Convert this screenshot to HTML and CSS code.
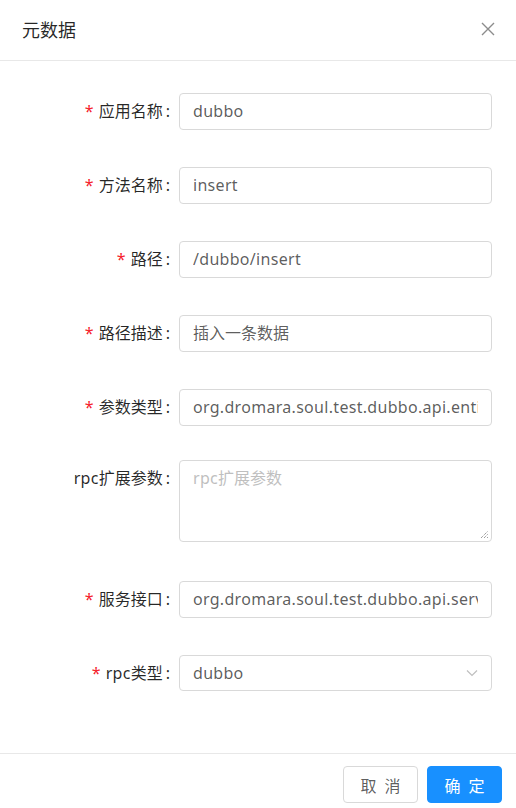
FILE: index.html
```html
<!DOCTYPE html>
<html lang="zh">
<head>
<meta charset="utf-8">
<title>元数据</title>
<link rel="stylesheet" href="styles.css">
</head>
<body>
<div class="modal">
  <div class="modal-header">
    <div class="modal-title">元数据</div>
    <svg class="close" width="14" height="14" viewBox="0 0 14 14"><path d="M1 1L13 13M13 1L1 13" stroke="#8c8c8c" stroke-width="1.4" fill="none"/></svg>
  </div>
  <div class="modal-body">
    <div class="form-item">
      <div class="label"><span class="req">*</span>应用名称<span class="colon">:</span></div>
      <div class="control input"><div class="value"><span class="en">dubbo</span></div></div>
    </div>
    <div class="form-item">
      <div class="label"><span class="req">*</span>方法名称<span class="colon">:</span></div>
      <div class="control input"><div class="value"><span class="en">insert</span></div></div>
    </div>
    <div class="form-item">
      <div class="label"><span class="req">*</span>路径<span class="colon">:</span></div>
      <div class="control input"><div class="value"><span class="en">/dubbo/insert</span></div></div>
    </div>
    <div class="form-item">
      <div class="label"><span class="req">*</span>路径描述<span class="colon">:</span></div>
      <div class="control input"><div class="value">插入一条数据</div></div>
    </div>
    <div class="form-item before-area">
      <div class="label"><span class="req">*</span>参数类型<span class="colon">:</span></div>
      <div class="control input"><div class="value"><span class="en">org.dromara.soul.test.dubbo.api.entity</span></div></div>
    </div>
    <div class="form-item area-item">
      <div class="label"><span class="en">rpc</span>扩展参数<span class="colon">:</span></div>
      <div class="control textarea">
        <span class="placeholder"><span class="en">rpc</span>扩展参数</span>
        <svg class="grip" width="9" height="9" viewBox="0 0 9 9"><path d="M1 8L8 1M4 8L8 4M7 8L8 7" stroke="#666" stroke-width="0.9" stroke-dasharray="1 1" fill="none"/></svg>
      </div>
    </div>
    <div class="form-item">
      <div class="label"><span class="req">*</span>服务接口<span class="colon">:</span></div>
      <div class="control input"><div class="value"><span class="en">org.dromara.soul.test.dubbo.api.service</span></div></div>
    </div>
    <div class="form-item">
      <div class="label"><span class="req">*</span><span class="en">rpc</span>类型<span class="colon">:</span></div>
      <div class="control input select">
        <span class="en">dubbo</span>
        <svg class="arrow" width="12" height="8" viewBox="0 0 12 8"><path d="M1 1.5L6 6.5L11 1.5" stroke="#bfbfbf" stroke-width="1.2" fill="none"/></svg>
      </div>
    </div>
  </div>
  <div class="modal-footer">
    <div class="btn">取 消</div>
    <div class="btn primary">确 定</div>
  </div>
</div>
</body>
</html>
```
FILE: styles.css
```css
* { box-sizing: border-box; }
html, body { margin: 0; padding: 0; background: #fff; }
body {
  font-family: "Noto Sans", "Noto Sans CJK SC", sans-serif;
  font-size: 16px;
  color: rgba(0,0,0,0.85);
  width: 516px;
  height: 808px;
  overflow: hidden;
}
.en { letter-spacing: 0.3px; }
.modal { display: flex; flex-direction: column; }
.modal-header {
  height: 61px;
  border-bottom: 1px solid #e8e8e8;
  display: flex;
  align-items: center;
  justify-content: space-between;
  padding: 0 21px 0 22px;
}
.modal-title { font-size: 18px; color: rgba(0,0,0,0.85); line-height: 24px; margin-top: -1px; }
.close { display: block; margin-top: -2px; }
.modal-body { padding: 32px 24px 24px 0; display: flex; flex-direction: column; }
.form-item { display: flex; align-items: flex-start; margin-bottom: 37px; }
.form-item.before-area { margin-bottom: 34px; }
.form-item.area-item { margin-bottom: 39px; }
.label {
  width: 179px;
  padding-right: 8px;
  text-align: right;
  line-height: 37px;
  white-space: nowrap;
  color: rgba(0,0,0,0.85);
}
.colon { margin: 0 1px 0 3px; }
.req { color: #f5222d; margin-right: 5px; font-family: "Noto Sans", sans-serif; }
.control {
  flex: 1;
  min-width: 0;
  border: 1px solid #d9d9d9;
  border-radius: 4px;
  background: #fff;
  color: rgba(0,0,0,0.65);
}
.input {
  height: 37px;
  line-height: 35px;
  padding: 0 13px;
  white-space: nowrap;
}
.value { overflow: hidden; white-space: nowrap; }
.select { display: flex; justify-content: space-between; align-items: center; height: 36px; line-height: 34px; padding-right: 13px; }
.arrow { display: block; margin-right: 0; }
.textarea {
  position: relative;
  height: 82px;
  padding: 4px 13px;
  line-height: 26px;
}
.placeholder { color: #bfbfbf; }
.grip { position: absolute; right: 2px; bottom: 2px; }
.modal-footer {
  border-top: 1px solid #e8e8e8;
  display: flex;
  justify-content: flex-end;
  gap: 9px;
  padding: 12px 14px 0 0;
}
.btn {
  width: 75px;
  height: 37px;
  border: 1px solid #d9d9d9;
  border-radius: 4px;
  display: flex;
  align-items: center;
  justify-content: center;
  color: rgba(0,0,0,0.65);
  letter-spacing: 2px;
  padding-left: 2px;
  background: #fff;
}
.btn.primary { background: #1890ff; border-color: #1890ff; color: #fff; }
```
